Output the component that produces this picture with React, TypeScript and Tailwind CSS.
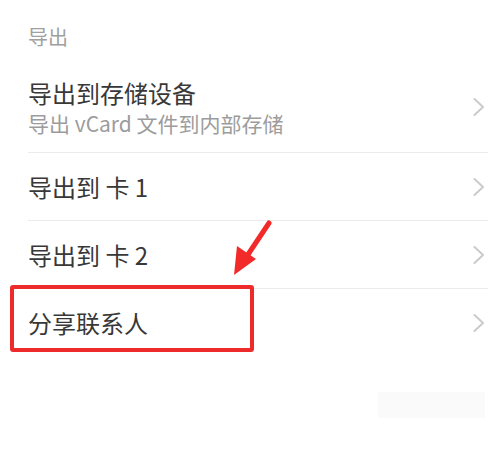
import React from "react";

const font = { fontFamily: '"Noto Sans CJK SC", "Noto Sans", sans-serif' };

function Chevron() {
  return (
    <svg width="12" height="18" viewBox="0 0 12 18" className="mr-[3px] shrink-0">
      <polyline points="1.5,1 10,9 1.5,17" fill="none" stroke="#cbcbcb" strokeWidth="2" strokeLinecap="round" strokeLinejoin="round" />
    </svg>
  );
}

function Row({ title, sub, first }: { title: string; sub?: string; first?: boolean }) {
  return (
    <div
      className={
        "ml-[28px] mr-[12px] flex items-center justify-between border-b border-[#ebebeb] " +
        (first ? "pt-[18px] pb-[16px]" : "h-[68px]")
      }
    >
      <div className="flex flex-col">
        <div className="text-[24px] leading-[30px] text-[#383838]">{title}</div>
        {sub && <div className="mt-[2px] text-[21px] leading-[26px] text-[#9c9c9c]">{sub}</div>}
      </div>
      <Chevron />
    </div>
  );
}

export default function App() {
  return (
    <div className="relative h-[450px] w-[500px] overflow-hidden bg-white" style={font}>
      <div className="h-[60px] pl-[28px] pt-[25px] text-[20px] leading-[24px] text-[#a0a0a0]">导出</div>
      <Row first title="导出到存储设备" sub="导出 vCard 文件到内部存储" />
      <Row title="导出到 卡 1" />
      <Row title="导出到 卡 2" />
      <div className="ml-[28px] mr-[12px] flex h-[67px] items-center justify-between">
        <div className="text-[24px] leading-[30px] text-[#383838]">分享联系人</div>
        <Chevron />
      </div>

      {/* blurred artifact */}
      <div className="absolute left-[378px] top-[392px] h-[26px] w-[107px] bg-[#fafafa]" />

      {/* red highlight box */}
      <div className="absolute left-[10px] top-[285px] h-[67px] w-[244px] rounded-[3px] border-[4px] border-[#ee2b2b]" />

      {/* red arrow */}
      <svg className="absolute left-[225px] top-[215px]" width="55" height="70" viewBox="0 0 55 70">
        <line x1="44" y1="8" x2="20" y2="44" stroke="#f22a2a" strokeWidth="5" strokeLinecap="round" />
        <polygon points="9,60 12,31 31,44" fill="#f22a2a" />
      </svg>
    </div>
  );
}
